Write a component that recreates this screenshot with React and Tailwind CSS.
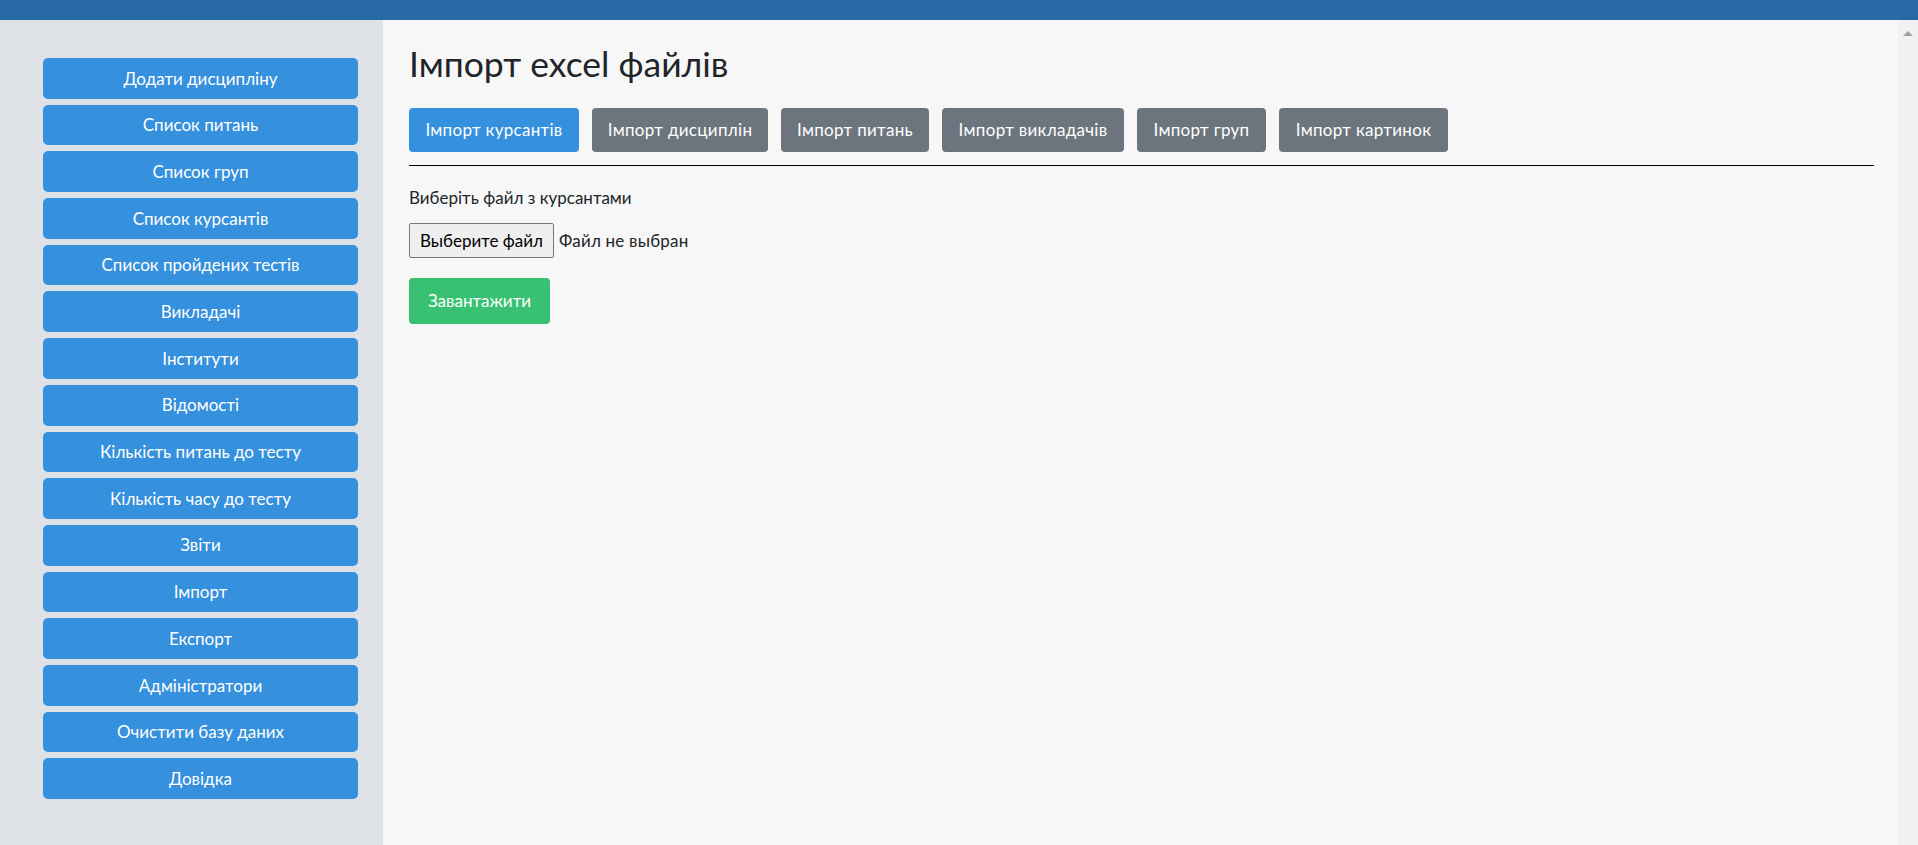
import React from 'react';

const menu = [
  'Додати дисципліну',
  'Список питань',
  'Список груп',
  'Список курсантів',
  'Список пройдених тестів',
  'Викладачі',
  'Інститути',
  'Відомості',
  'Кількість питань до тесту',
  'Кількість часу до тесту',
  'Звіти',
  'Імпорт',
  'Експорт',
  'Адміністратори',
  'Очистити базу даних',
  'Довідка',
];

const tabs = [
  { label: 'Імпорт курсантів', w: 'w-[170px]', active: true },
  { label: 'Імпорт дисциплін', w: 'w-[176px]' },
  { label: 'Імпорт питань', w: 'w-[148px]' },
  { label: 'Імпорт викладачів', w: 'w-[182px]' },
  { label: 'Імпорт груп', w: 'w-[129px]' },
  { label: 'Імпорт картинок', w: 'w-[169px]' },
];

export default function App() {
  return (
    <div className="h-[845px] flex flex-col overflow-hidden font-['Lato','Noto_Sans',sans-serif] text-[#212529]">
      <div className="h-[20px] bg-[#2769a4] shrink-0" />
      <div className="flex flex-1 min-h-0">
        {/* sidebar */}
        <aside className="w-[383px] shrink-0 bg-[#dee1e6] pt-[38px] pl-[43px]">
          <nav className="w-[315px] flex flex-col gap-[6px]">
            {menu.map((item) => (
              <button
                key={item}
                className="h-[40.7px] rounded-[5px] bg-[#3590dd] text-white text-[17px] flex items-center justify-center"
              >
                {item}
              </button>
            ))}
          </nav>
        </aside>

        {/* main */}
        <main className="flex-1 bg-[#f7f7f7] pl-[26px] pr-[24px] pt-[20px]">
          <h2 className="text-[35.5px] leading-[48px] font-normal">Імпорт excel файлів</h2>

          <div className="flex gap-[13px] mt-[20px]">
            {tabs.map((t) => (
              <button
                key={t.label}
                className={`${t.w} h-[44px] rounded-[4px] text-white text-[17px] tracking-[0.3px] flex items-center justify-center ${
                  t.active ? 'bg-[#3590dd]' : 'bg-[#6c757d]'
                }`}
              >
                {t.label}
              </button>
            ))}
          </div>

          <hr className="mt-[13px] border-0 border-t border-black" />

          <p className="mt-[20px] text-[17px] leading-[24px]">Виберіть файл з курсантами</p>

          <div className="mt-[13px] flex items-center">
            <button className="h-[35px] w-[145px] border border-[#767676] rounded-[2px] bg-[#efefef] text-black text-[17px]">
              Выберите файл
            </button>
            <span className="ml-[5px] text-[17px] tracking-[0.2px]">Файл не выбран</span>
          </div>

          <button className="mt-[20px] h-[46px] w-[141px] rounded-[4px] bg-[#38c172] text-white text-[17px]">
            Завантажити
          </button>
        </main>

        {/* scrollbar */}
        <div className="w-[20px] shrink-0 bg-[#f1f1f1] flex justify-center pt-[11px]">
          <div className="w-0 h-0 border-l-[5px] border-r-[5px] border-b-[5px] border-l-transparent border-r-transparent border-b-[#a3a3a3]" />
        </div>
      </div>
    </div>
  );
}
